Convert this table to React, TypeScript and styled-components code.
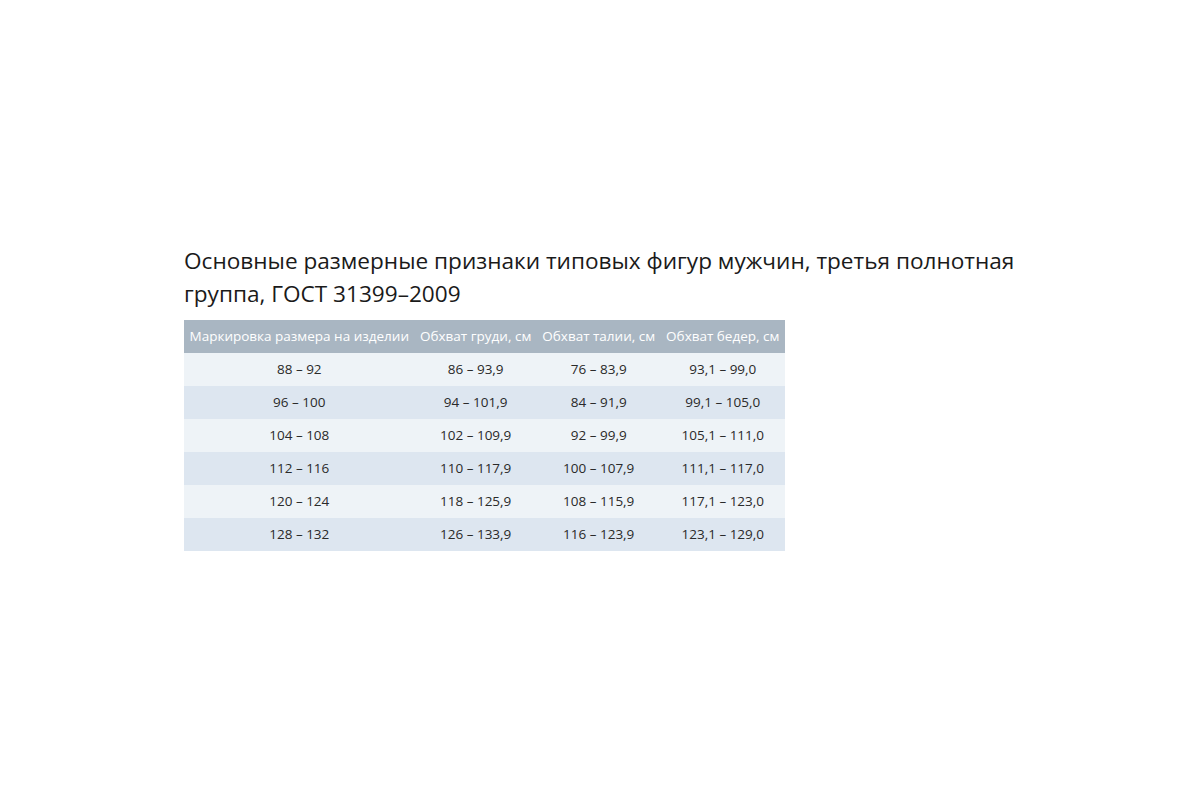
import React from "react";
import styled, { createGlobalStyle } from "styled-components";

const GlobalStyle = createGlobalStyle`
  html, body {
    margin: 0;
    padding: 0;
    background: #ffffff;
  }
  body {
    font-family: "Open Sans", "Liberation Sans", sans-serif;
    color: #222;
  }
`;

const Page = styled.div`
  box-sizing: border-box;
  min-height: 100vh;
  padding-bottom: 6px;
  display: flex;
  align-items: center;
  justify-content: center;
`;

const Content = styled.div`
  width: 832px;
`;

const Title = styled.h2`
  margin: 0 0 10px;
  font-size: 22.6px;
  line-height: 33px;
  font-weight: 400;
  color: #1a1a1a;
  white-space: normal;
`;

const Table = styled.table`
  border-collapse: collapse;
  font-size: 13.5px;
`;

const HeadCell = styled.th`
  background: #a9b6c2;
  color: #ffffff;
  font-weight: 400;
  height: 33px;
  padding: 0 5.5px;
  white-space: nowrap;
  text-align: center;
`;

const Row = styled.tr<{ $alt: boolean }>`
  background: ${(p) => (p.$alt ? "#dde6f0" : "#eef3f7")};
`;

const Cell = styled.td`
  height: 33px;
  padding: 0 5.5px;
  text-align: center;
  color: #2a2a2a;
  white-space: nowrap;
`;

const headers = [
  "Маркировка размера на изделии",
  "Обхват груди, см",
  "Обхват талии, см",
  "Обхват бедер, см",
];

const rows = [
  ["88 – 92", "86 – 93,9", "76 – 83,9", "93,1 – 99,0"],
  ["96 – 100", "94 – 101,9", "84 – 91,9", "99,1 – 105,0"],
  ["104 – 108", "102 – 109,9", "92 – 99,9", "105,1 – 111,0"],
  ["112 – 116", "110 – 117,9", "100 – 107,9", "111,1 – 117,0"],
  ["120 – 124", "118 – 125,9", "108 – 115,9", "117,1 – 123,0"],
  ["128 – 132", "126 – 133,9", "116 – 123,9", "123,1 – 129,0"],
];

const App: React.FC = () => (
  <>
    <GlobalStyle />
    <Page>
      <Content>
        <Title>
          Основные размерные признаки типовых фигур мужчин, третья полнотная
          группа, ГОСТ 31399–2009
        </Title>
        <Table>
          <thead>
            <tr>
              {headers.map((h) => (
                <HeadCell key={h}>{h}</HeadCell>
              ))}
            </tr>
          </thead>
          <tbody>
            {rows.map((r, i) => (
              <Row key={r[0]} $alt={i % 2 === 1}>
                {r.map((c, j) => (
                  <Cell key={j}>{c}</Cell>
                ))}
              </Row>
            ))}
          </tbody>
        </Table>
      </Content>
    </Page>
  </>
);

export default App;
